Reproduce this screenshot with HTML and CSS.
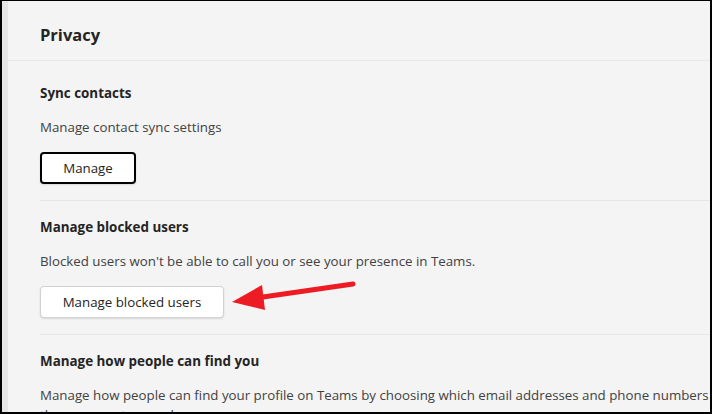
FILE: index.html
```html
<!DOCTYPE html>
<html lang="en">
<head>
    <meta charset="UTF-8">
    <meta name="viewport" content="width=device-width, initial-scale=1.0">
    <title>Privacy</title>
    <link rel="stylesheet" href="styles.css">
</head>
<body>
    <div class="frame">
        <div class="rail"></div>
        <div class="main">
            <div class="header">
                <h1>Privacy</h1>
            </div>

            <div class="section first">
                <h2>Sync contacts</h2>
                <p>Manage contact sync settings</p>
                <button class="btn focused">Manage</button>
            </div>

            <div class="section">
                <h2>Manage blocked users</h2>
                <p>Blocked users won't be able to call you or see your presence in Teams.</p>
                <button class="btn wide">Manage blocked users</button>
            </div>

            <div class="section last">
                <h2>Manage how people can find you</h2>
                <p>Manage how people can find your profile on Teams by choosing which email addresses and phone numbers they can use to search.</p>
            </div>
        </div>

        <!-- annotation arrow -->
        <svg class="arrow" width="712" height="414" viewBox="0 0 712 414">
            <line x1="353" y1="284" x2="256" y2="298" stroke="#ed1c24" stroke-width="5" stroke-linecap="round"/>
            <polygon points="232,302 262,285 265,310" fill="#ed1c24"/>
        </svg>
    </div>
</body>
</html>
```

FILE: styles.css
```css
* {
    box-sizing: border-box;
}
body {
    margin: 0;
    font-family: "Open Sans", "Noto Sans", Arial, sans-serif;
    background: #000;
}
.frame {
    position: relative;
    display: flex;
    width: 712px;
    height: 414px;
    border-style: solid;
    border-color: #000;
    border-width: 1px 2px 2px 2px;
    overflow: hidden;
}
.rail {
    width: 6px;
    background: #e6e6e6;
}
.main {
    flex: 1;
    background: #f4f4f4;
    overflow: hidden;
}
.header {
    height: 60px;
    padding: 22px 0 0 32px;
    border-bottom: 1px solid #e8e8e8;
}
h1 {
    margin: 0;
    font-size: 16.5px;
    line-height: 24px;
    font-weight: 700;
    color: #242424;
}
.section {
    margin-left: 32px;
    padding: 16px 0 16px 0;
    border-bottom: 1px solid #e6e6e6;
}
.section.first {
    padding-top: 22px;
}
.section.last {
    border-bottom: none;
}
h2 {
    margin: 0;
    font-size: 13.4px;
    line-height: 20px;
    font-weight: 700;
    color: #242424;
}
p {
    margin: 14px 0 15px 0;
    font-size: 13.3px;
    line-height: 20px;
    color: #424242;
}
.btn {
    display: block;
    height: 32px;
    padding: 0;
    font-family: inherit;
    font-size: 13.3px;
    color: #242424;
    background: #fff;
    border: 1px solid #d1d1d1;
    border-radius: 4px;
    box-shadow: 0 1px 2px rgba(0,0,0,0.12);
}
.btn.focused {
    width: 96px;
    border: 2px solid #000;
}
.btn.wide {
    width: 184px;
}
.arrow {
    position: absolute;
    top: -1px;
    left: -2px;
}
```
